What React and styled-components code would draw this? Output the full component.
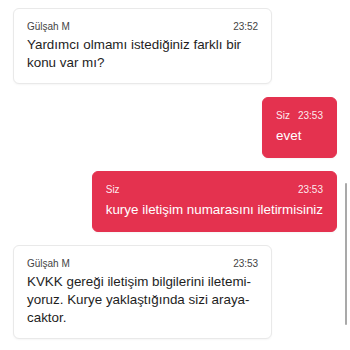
import styled, { createGlobalStyle } from "styled-components";

const GlobalStyle = createGlobalStyle`
  html, body {
    margin: 0;
    padding: 0;
    background: #ffffff;
  }
  body {
    font-family: "Liberation Sans", Arial, sans-serif;
  }
`;

const Screen = styled.div`
  position: relative;
  width: 350px;
  height: 350px;
  overflow: hidden;
  background: #ffffff;
`;

const Thread = styled.div`
  display: flex;
  flex-direction: column;
  gap: 13px;
  padding: 8px 13px 0 13px;
`;

const Bubble = styled.div`
  box-sizing: border-box;
  max-width: 80%;
  width: fit-content;
  align-self: ${(p) => (p.$mine ? "flex-end" : "flex-start")};
  border-radius: 6px;
  padding: ${(p) => (p.$mine ? "11px 13px 12px" : "11px 13px 11px")};
  background: ${(p) => (p.$mine ? "#e4324f" : "#ffffff")};
  border: 1px solid ${(p) => (p.$mine ? "#e4324f" : "#e9e9e9")};
  box-shadow: 0 1px 2px rgba(0, 0, 0, 0.04);
  color: ${(p) => (p.$mine ? "#ffffff" : "#1e1e1e")};
`;

const Meta = styled.div`
  display: flex;
  justify-content: space-between;
  gap: 8px;
  font-size: 10px;
  line-height: 13px;
  color: ${(p) => (p.$mine ? "rgba(255,255,255,0.92)" : "#444444")};
  margin-bottom: ${(p) => (p.$mine ? "5px" : "3px")};
`;

const Body = styled.div`
  font-size: 13.4px;
  line-height: 18px;
`;

const Scrollbar = styled.div`
  position: absolute;
  left: 345px;
  top: 183px;
  width: 2px;
  height: 142px;
  border-radius: 1px;
  background: #a9a9a9;
`;

const Message = ({ mine, who, time, children }) => (
  <Bubble $mine={mine}>
    <Meta $mine={mine}>
      <span>{who}</span>
      <span>{time}</span>
    </Meta>
    <Body>{children}</Body>
  </Bubble>
);

export default function App() {
  return (
    <Screen>
      <GlobalStyle />
      <Thread>
        <Message who="Gülşah M" time="23:52">
          Yardımcı olmamı istediğiniz farklı bir konu var mı?
        </Message>
        <Message mine who="Siz" time="23:53">
          evet
        </Message>
        <Message mine who="Siz" time="23:53">
          kurye iletişim numarasını iletirmisiniz
        </Message>
        <Message who="Gülşah M" time="23:53">
          KVKK gereği iletişim bilgilerini iletemi{"\u00AD"}yoruz. Kurye yaklaştığında sizi araya{"\u00AD"}caktor.
        </Message>
      </Thread>
      <Scrollbar />
    </Screen>
  );
}
